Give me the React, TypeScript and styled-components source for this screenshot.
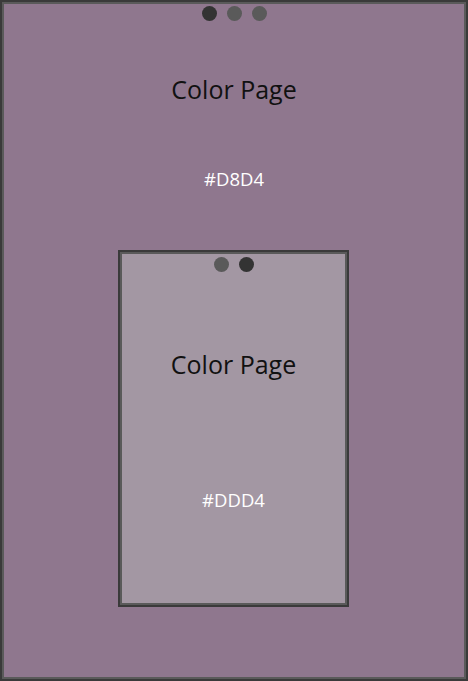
import styled, { createGlobalStyle } from "styled-components";

const GlobalStyle = createGlobalStyle`
  html, body {
    margin: 0;
    padding: 0;
    background: #8f778e;
  }
  body {
    font-family: "Open Sans", "Noto Sans", sans-serif;
  }
`;

const Frame = styled.div<{ $nested?: boolean }>`
  box-sizing: border-box;
  display: flex;
  flex-direction: column;
  align-items: center;
  width: ${(p) => (p.$nested ? "231px" : "468px")};
  height: ${(p) => (p.$nested ? "357px" : "681px")};
  padding-top: ${(p) => (p.$nested ? "4px" : "3px")};
  background: ${(p) => (p.$nested ? "#a397a3" : "#8f778e")};
  border: 2px solid #3a3a3a;
  box-shadow: inset 0 0 0 2px #5a5a5a;
`;

const Dots = styled.div`
  display: flex;
  gap: 10px;
  margin-top: 1px;
`;

const Dot = styled.span<{ $active?: boolean }>`
  width: 15px;
  height: 15px;
  border-radius: 50%;
  background: ${(p) => (p.$active ? "#333333" : "#5a5a5a")};
`;

const Title = styled.div<{ $gap: number }>`
  margin-top: ${(p) => p.$gap}px;
  font-size: 25px;
  line-height: 32px;
  color: #111;
`;

const Hex = styled.div<{ $gap: number }>`
  margin-top: ${(p) => p.$gap}px;
  font-size: 18.5px;
  line-height: 24px;
  color: #fff;
`;

const Slot = styled.div`
  margin-top: 59px;
  margin-right: 1px;
`;

export default function App() {
  return (
    <>
      <GlobalStyle />
      <Frame>
        <Dots>
          <Dot $active />
          <Dot />
          <Dot />
        </Dots>
        <Title $gap={52}>Color Page</Title>
        <Hex $gap={62}>#D8D4</Hex>
        <Slot>
          <Frame $nested>
            <Dots>
              <Dot />
              <Dot $active />
            </Dots>
            <Title $gap={76}>Color Page</Title>
            <Hex $gap={108}>#DDD4</Hex>
          </Frame>
        </Slot>
      </Frame>
    </>
  );
}
